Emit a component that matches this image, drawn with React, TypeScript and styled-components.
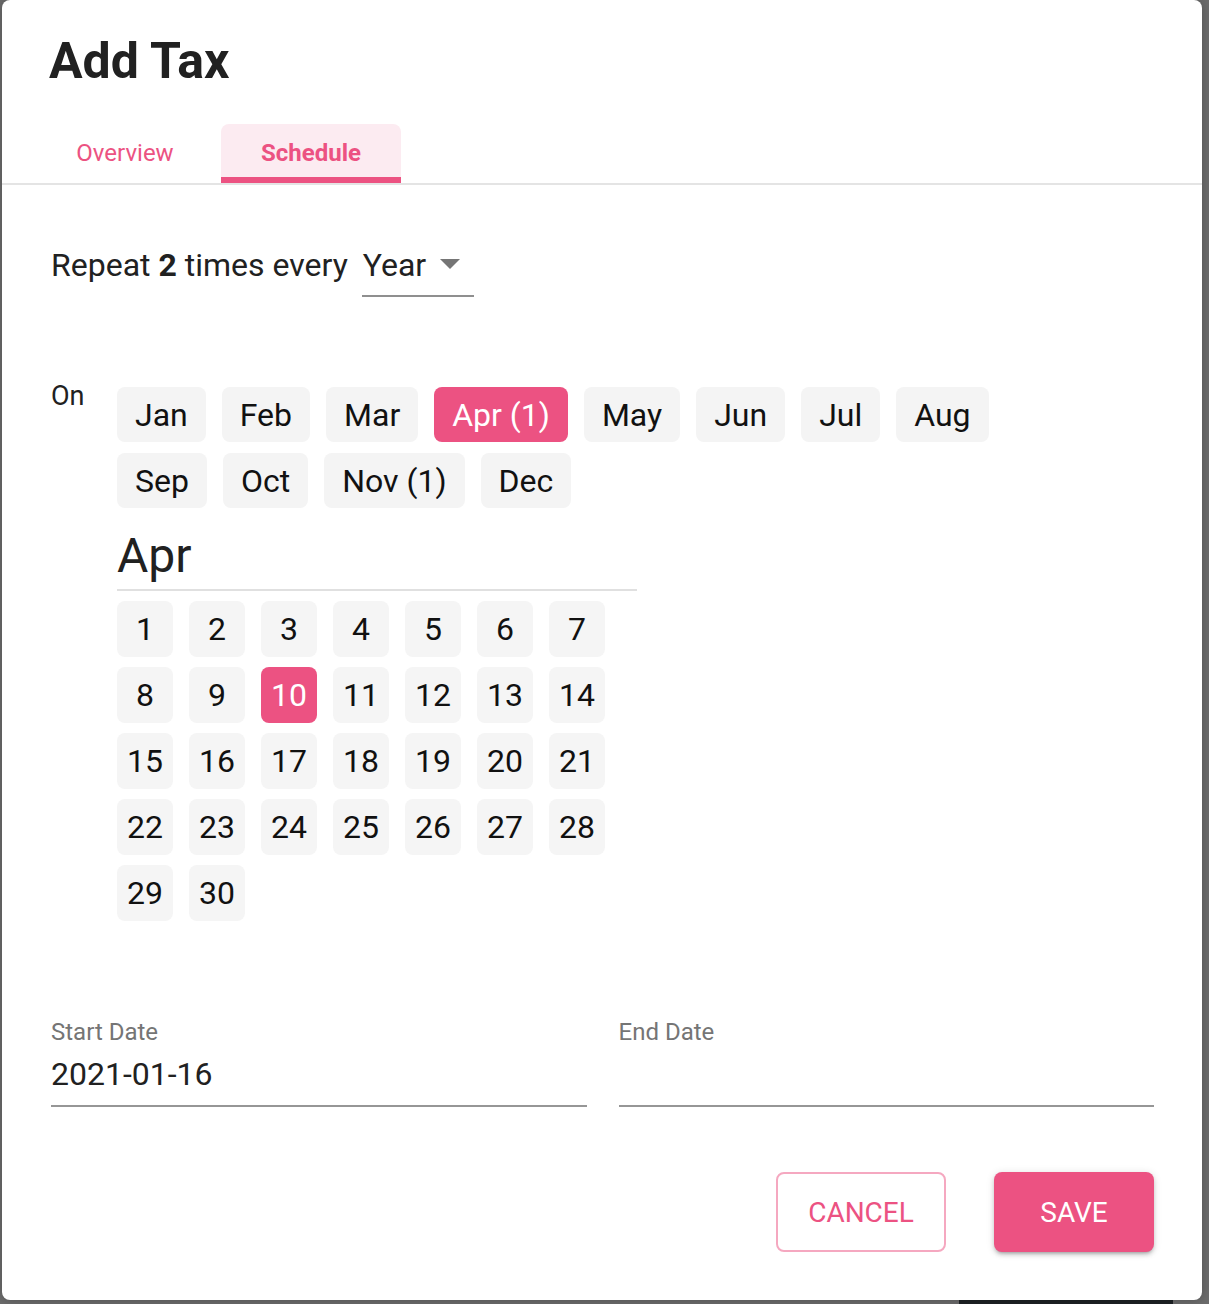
import React, { useState } from 'react'
import styled, { createGlobalStyle } from 'styled-components'

const PINK = '#ec5282'

const GlobalStyle = createGlobalStyle`
  html, body {
    margin: 0;
    padding: 0;
    background: #6c6c6c;
  }
  body {
    font-family: Roboto, "Noto Sans", "Liberation Sans", sans-serif;
    -webkit-font-smoothing: antialiased;
  }
  * { box-sizing: border-box; }
`

const months = ['Jan', 'Feb', 'Mar', 'Apr', 'May', 'Jun', 'Jul', 'Aug', 'Sep', 'Oct', 'Nov', 'Dec']
const counts: Record<string, number> = { Apr: 1, Nov: 1 }
const days = Array.from({ length: 30 }, (_, i) => i + 1)

export default function App() {
  const [tab, setTab] = useState('schedule')
  const [month, setMonth] = useState('Apr')
  const [day, setDay] = useState(10)

  return (
    <Page>
      <GlobalStyle />
      <BehindButton>ADD EXPENSE</BehindButton>
      <Dialog>
        <Title>Add Tax</Title>
        <TabList>
          <Tab $active={tab === 'overview'} onClick={() => setTab('overview')}>Overview</Tab>
          <Tab $active={tab === 'schedule'} onClick={() => setTab('schedule')}>Schedule</Tab>
        </TabList>

        <Body>
          <RepeatRow>
            <RepeatText>
              Repeat <b>2</b> times every
            </RepeatText>
            <Select>
              Year
              <Arrow />
            </Select>
          </RepeatRow>

          <OnRow>
            <OnLabel>On</OnLabel>
            <Schedule>
              <MonthWrap>
                {months.map((m) => (
                  <Chip key={m} $active={m === month} onClick={() => setMonth(m)}>
                    {m}
                    {counts[m] ? ` (${counts[m]})` : ''}
                  </Chip>
                ))}
              </MonthWrap>
              <MonthTitle>{month}</MonthTitle>
              <DayGrid>
                {days.map((d) => (
                  <DayCell key={d} $active={d === day} onClick={() => setDay(d)}>
                    {d}
                  </DayCell>
                ))}
              </DayGrid>
            </Schedule>
          </OnRow>

          <DateRow>
            <DateField>
              <FieldLabel>Start Date</FieldLabel>
              <FieldValue>2021-01-16</FieldValue>
            </DateField>
            <DateField>
              <FieldLabel>End Date</FieldLabel>
              <FieldValue />
            </DateField>
          </DateRow>

          <Actions>
            <OutlineButton>CANCEL</OutlineButton>
            <FilledButton>SAVE</FilledButton>
          </Actions>
        </Body>
      </Dialog>
    </Page>
  )
}

const Page = styled.div`
  position: relative;
  height: 1304px;
  overflow: hidden;
  padding-left: 2px;
`

const BehindButton = styled.div`
  position: absolute;
  left: 959px;
  top: 1300px;
  width: 214px;
  height: 40px;
  background: #1d2225;
  color: #9a9a9a;
  font-size: 28px;
  line-height: 1;
  padding-top: 2px;
  text-align: center;
`

const Dialog = styled.div`
  position: relative;
  width: 1200px;
  height: 1300px;
  background: #fff;
  border-radius: 8px;
  display: flex;
  flex-direction: column;
  box-shadow: 0 0 12px rgba(0, 0, 0, 0.25);
`

const Title = styled.h2`
  margin: 0;
  padding: 32px 49px 0 47px;
  font-size: 50px;
  line-height: 58px;
  font-weight: 700;
  color: #212121;
`

const TabList = styled.div`
  display: flex;
  gap: 6px;
  margin-top: 34px;
  padding-left: 33px;
  border-bottom: 2px solid #e4e4e4;
`

const Tab = styled.button<{ $active?: boolean }>`
  width: 180px;
  height: 59px;
  padding: 5px 0 0;
  border: none;
  border-bottom: 6px solid ${(p) => (p.$active ? PINK : 'transparent')};
  border-radius: 8px 8px 0 0;
  background: ${(p) => (p.$active ? '#fcebf1' : 'transparent')};
  color: ${PINK};
  font-family: inherit;
  font-size: 24px;
  font-weight: ${(p) => (p.$active ? 700 : 400)};
  cursor: pointer;
`

const Body = styled.div`
  flex: 1;
  display: flex;
  flex-direction: column;
  padding: 0 48px 48px 49px;
  color: #212121;
`

const RepeatRow = styled.div`
  display: flex;
  align-items: flex-start;
  gap: 14px;
  margin-top: 60px;
`

const RepeatText = styled.div`
  font-size: 32px;
  line-height: 40px;
  b { font-weight: 700; }
`

const Select = styled.div`
  display: flex;
  align-items: center;
  gap: 14px;
  width: 112px;
  padding: 0 0 10px 1px;
  font-size: 32px;
  line-height: 40px;
  border-bottom: 2px solid #8f8f8f;
`

const Arrow = styled.span`
  width: 0;
  height: 0;
  border-left: 10px solid transparent;
  border-right: 10px solid transparent;
  border-top: 10px solid #757575;
  margin-top: -2px;
`

const OnRow = styled.div`
  display: flex;
  margin-top: 90px;
`

const OnLabel = styled.div`
  width: 66px;
  flex-shrink: 0;
  margin-top: -4px;
  font-size: 27px;
  line-height: 27px;
`

const Schedule = styled.div`
  display: flex;
  flex-direction: column;
`

const MonthWrap = styled.div`
  display: flex;
  flex-wrap: wrap;
  gap: 11px 16px;
  max-width: 920px;
`

const Chip = styled.button<{ $active?: boolean }>`
  height: 55px;
  padding: 0 18px;
  border: none;
  border-radius: 8px;
  background: ${(p) => (p.$active ? PINK : '#f4f4f4')};
  color: ${(p) => (p.$active ? '#fff' : '#111')};
  font-family: inherit;
  font-size: 32px;
  cursor: pointer;
`

const MonthTitle = styled.div`
  width: 520px;
  margin-top: 20px;
  padding-bottom: 5px;
  font-size: 48px;
  line-height: 56px;
  color: #212121;
  border-bottom: 2px solid #e0e0e0;
`

const DayGrid = styled.div`
  display: grid;
  grid-template-columns: repeat(7, 56px);
  gap: 10px 16px;
  margin-top: 10px;
`

const DayCell = styled.button<{ $active?: boolean }>`
  height: 56px;
  padding: 0;
  border: none;
  border-radius: 8px;
  background: ${(p) => (p.$active ? PINK : '#f5f5f5')};
  color: ${(p) => (p.$active ? '#fff' : '#111')};
  font-family: inherit;
  font-size: 32px;
  cursor: pointer;
`

const DateRow = styled.div`
  display: grid;
  grid-template-columns: 1fr 1fr;
  gap: 32px;
  margin-top: 97px;
`

const DateField = styled.div`
  display: flex;
  flex-direction: column;
`

const FieldLabel = styled.div`
  font-size: 24px;
  line-height: 28px;
  color: #757575;
`

const FieldValue = styled.div`
  height: 53px;
  margin-top: 8px;
  padding-bottom: 11px;
  font-size: 32px;
  line-height: 40px;
  color: #212121;
  border-bottom: 2px solid #969696;
`

const Actions = styled.div`
  display: flex;
  justify-content: flex-end;
  gap: 48px;
  margin-top: auto;
`

const OutlineButton = styled.button`
  width: 170px;
  height: 80px;
  border: 2px solid #f5a8c0;
  border-radius: 8px;
  background: #fff;
  color: ${PINK};
  font-family: inherit;
  font-size: 28px;
  cursor: pointer;
`

const FilledButton = styled.button`
  width: 160px;
  height: 80px;
  border: none;
  border-radius: 8px;
  background: ${PINK};
  color: #fff;
  font-family: inherit;
  font-size: 28px;
  cursor: pointer;
  box-shadow: 0 3px 3px -2px rgba(0, 0, 0, 0.2), 0 3px 4px rgba(0, 0, 0, 0.14), 0 1px 8px rgba(0, 0, 0, 0.12);
`
